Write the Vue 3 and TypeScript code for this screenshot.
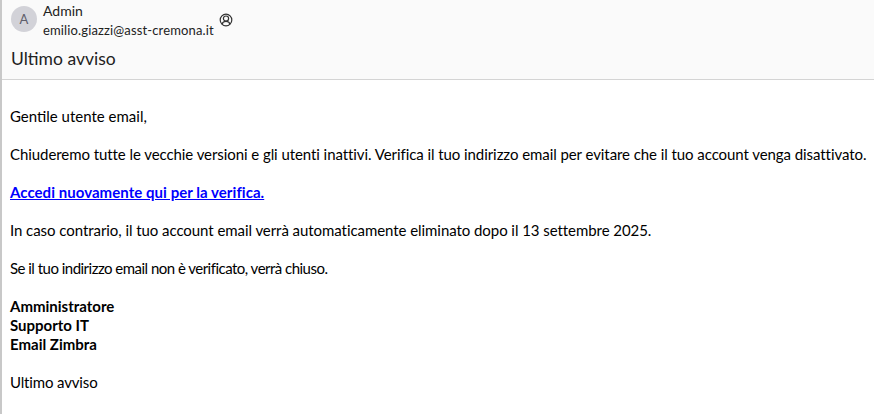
<script setup lang="ts">
const account = "emilio.giazzi@asst-cremona.it";
</script>

<template>
  <div class="mail">
    <header class="head">
      <div class="sender">
        <div class="avatar">A</div>
        <div class="who">
          <div class="name">Admin</div>
          <div class="addr">{{ account }}</div>
        </div>
        <svg class="badge" width="14" height="14" viewBox="0 0 14 14" fill="none" stroke="#333" stroke-width="1.2">
          <circle cx="7" cy="7" r="5.8" />
          <circle cx="7" cy="5.6" r="2.6" />
          <path d="M3 11.200c.6-1.800 2-2.800 4-2.800s3.400 1 4 2.800" />
        </svg>
      </div>
      <h1 class="subject">Ultimo avviso</h1>
    </header>
    <main class="body">
      <p class="natural">Gentile utente email,</p>
      <p class="tight">Chiuderemo tutte le vecchie versioni e gli utenti inattivi. Verifica il tuo indirizzo email per evitare che il tuo account venga disattivato.</p>
      <p><a href="#" class="link">Accedi nuovamente qui per la verifica.</a></p>
      <p class="snug">In caso contrario, il tuo account email verrà automaticamente eliminato dopo il 13 settembre 2025.</p>
      <p class="tighter">Se il tuo indirizzo email non è verificato, verrà chiuso.</p>
      <p class="sign">Amministratore<br />Supporto IT<br />Email Zimbra</p>
      <p class="closing">Ultimo avviso</p>
    </main>
  </div>
</template>

<style>
html, body { background: #fff; }
</style>

<style scoped>
.mail {
  width: 874px;
  height: 414px;
  box-sizing: border-box;
  border-left: 2px solid #c8c8c8;
  overflow: hidden;
  font-family: Lato, "Open Sans", sans-serif;
  color: #000;
  background: #fff;
}
.head {
  height: 80px;
  box-sizing: border-box;
  background: #fafafa;
  border-bottom: 1px solid #d4d4d4;
  padding: 2px 0 0 9px;
}
.sender { display: flex; align-items: flex-start; }
.avatar {
  width: 26px;
  height: 26px;
  margin-top: 4px;
  border-radius: 50%;
  background: #d2d2d8;
  color: #5f5f6b;
  font-size: 13px;
  display: flex;
  align-items: center;
  justify-content: center;
}
.who { margin-left: 6px; color: #222; }
.name { font-size: 14px; line-height: 18px; }
.addr { font-size: 13px; line-height: 20px; letter-spacing: 0.14px; }
.badge { margin: 11px 0 0 5px; }
.subject {
  margin: 7px 0 0;
  font-size: 17.5px;
  line-height: 24px;
  font-weight: 400;
  color: #222;
}
.body { padding: 27px 0 0 8px; font-size: 15px; line-height: 19px; }
.body p { margin: 0 0 19px; white-space: nowrap; }
.natural { letter-spacing: 0; }
.tight { letter-spacing: -0.07px; }
.snug { letter-spacing: -0.06px; }
.tighter { letter-spacing: -0.52px; }
.closing { letter-spacing: -0.15px; }
.link { color: #0000ff; font-weight: 700; text-decoration: underline; letter-spacing: 0.05px; }
.sign { font-weight: 700; }
</style>
